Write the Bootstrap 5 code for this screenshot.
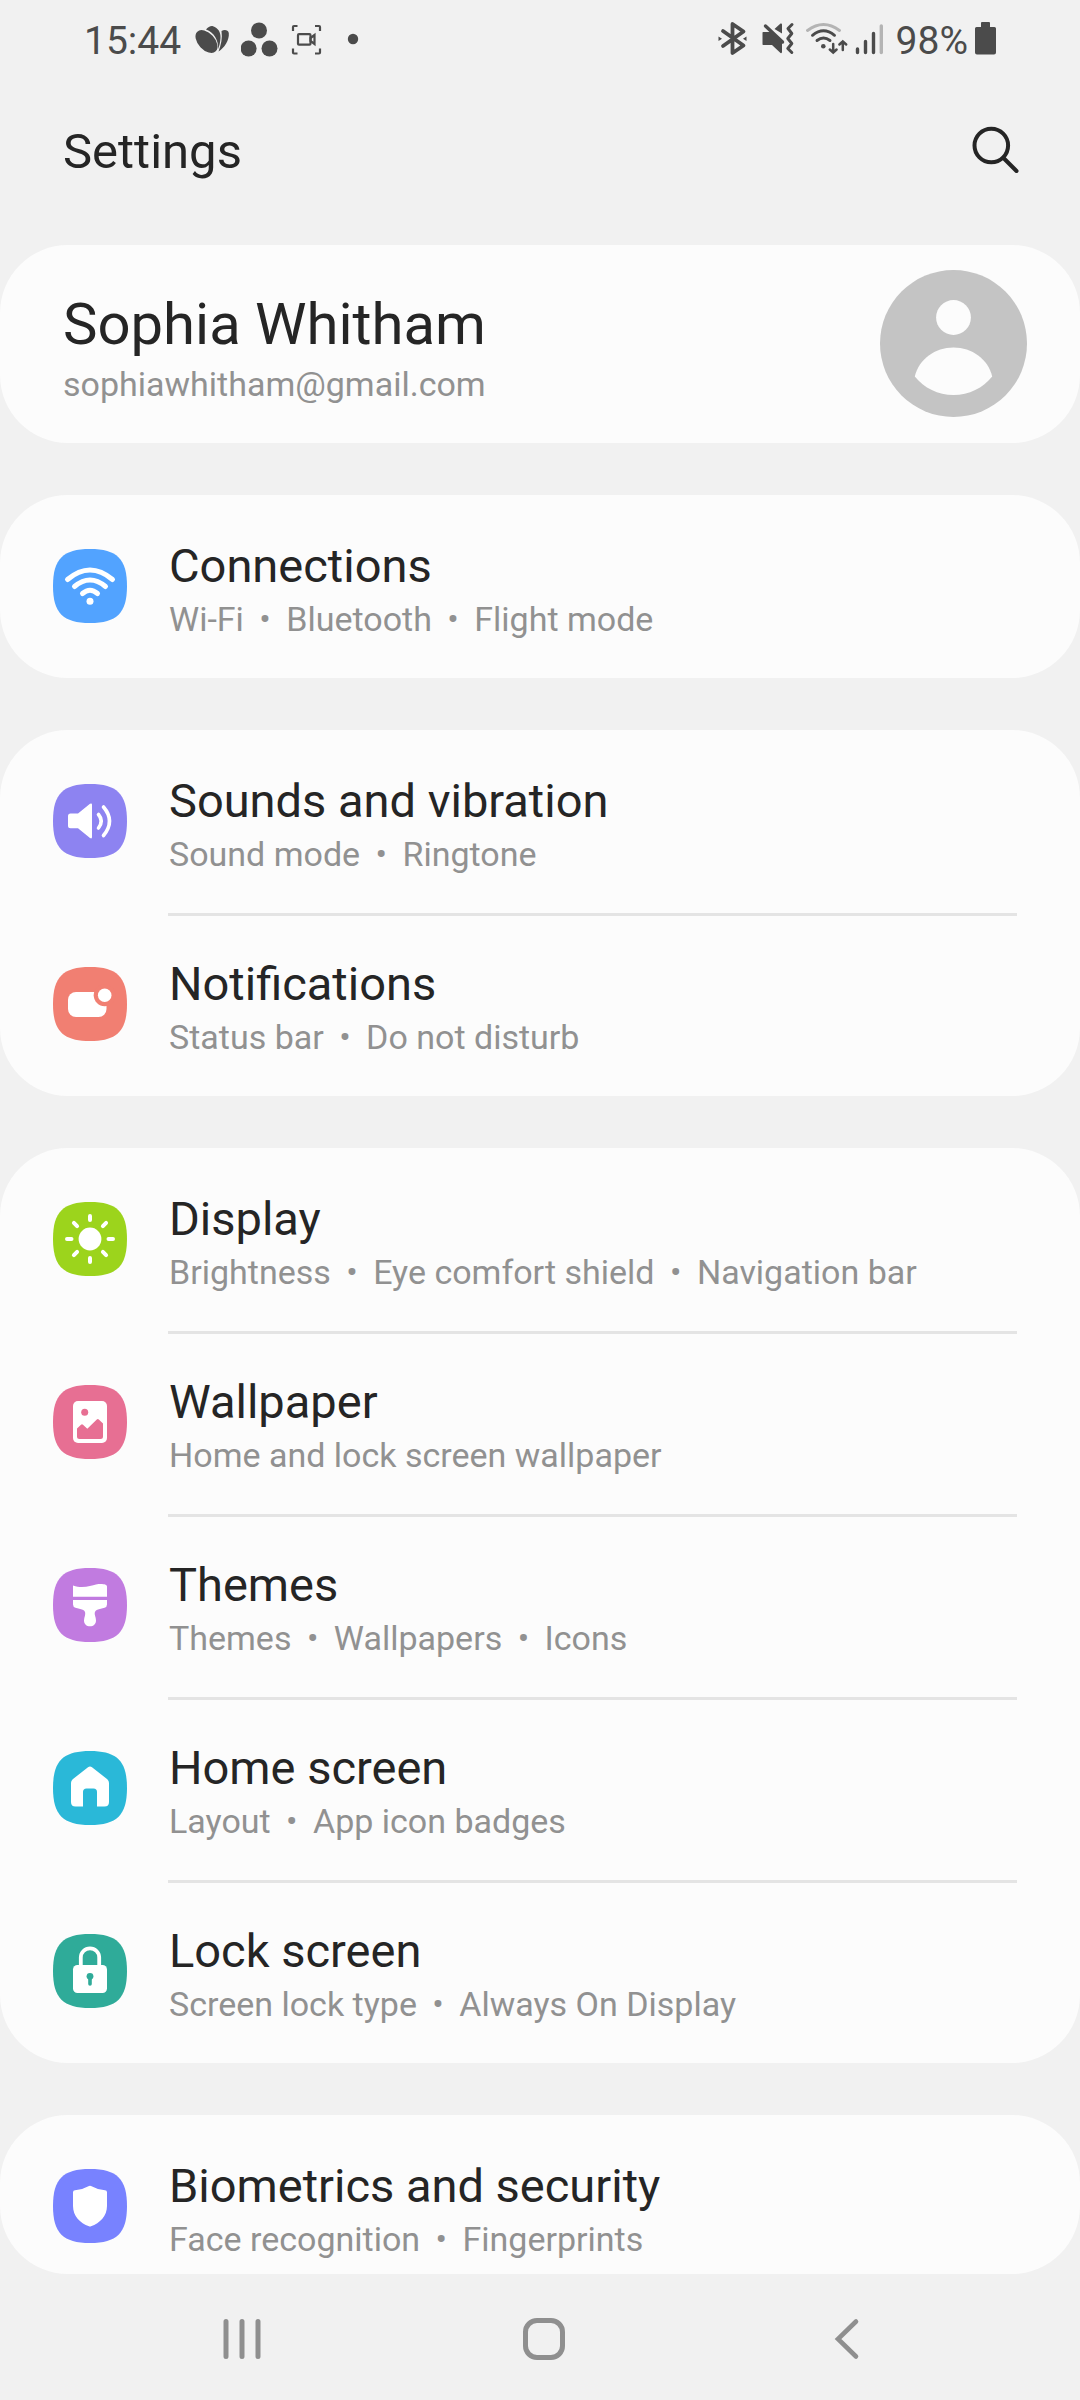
<!DOCTYPE html>
<html lang="en">
<head>
<meta charset="utf-8">
<meta name="viewport" content="width=device-width, initial-scale=1">
<title>Settings</title>
<link href="https://cdn.jsdelivr.net/npm/bootstrap@5.3.0/dist/css/bootstrap.min.css" rel="stylesheet">
<style>
  body { background: #f1f1f1; color: #252525; font-family: Roboto, "Noto Sans", sans-serif; }
  svg { display: block; flex: none; }
  .status-bar { height: 81px; padding: 0 80px 0 84px; color: #4b4b4b; font-size: 39px; line-height: 46px; }
  .status-left { gap: 8px; }
  .status-right { gap: 4px; }
  .page-head { padding: 41px 58px 63px 63px; }
  .page-title { font-size: 49px; line-height: 60px; font-weight: 400; }
  .panel-stack { gap: 52px; }
  .panel { background: #fcfcfc; border-radius: 68px; overflow: hidden; }
  .profile { padding: 25px 53px 26px 63px; }
  .profile-name { font-size: 58px; line-height: 72px; }
  .profile-text { padding-top: 8px; }
  .profile-mail { font-size: 34px; line-height: 48px; color: #919191; }
  .setting { padding: 0 63px 0 53px; gap: 41px; }
  .setting-icon { margin-top: 54px; }
  .setting-text { padding: 39px 0 37px 1px; }
  .setting + .setting .setting-text { border-top: 3px solid #e4e4e4; padding-top: 36px; }
  .setting-name { font-size: 47px; line-height: 63px; }
  .setting-info { font-size: 34px; line-height: 44px; color: #919191; }
  .sep { margin: 0 7px; }
  .panel-cut .setting-text { padding-bottom: 13px; }
  .nav-keys { height: 126px; padding: 4px 83px 0 91px; color: #8f8f8f; background: #f1f1f1; }
</style>
</head>
<body>
<svg width="0" height="0" class="position-absolute" aria-hidden="true">
  <symbol id="tile" viewBox="0 0 74 74"><path fill="currentColor" d="M37 0C64 0 74 10 74 37S64 74 37 74 0 64 0 37 10 0 37 0z"/></symbol>
</svg>

<div class="status-bar d-flex justify-content-between align-items-center">
  <div class="status-left d-flex align-items-center">
    <span>15:44</span>
    <svg width="44" height="40" viewBox="189 21 44 40" fill="currentColor">
      <ellipse cx="206.500" cy="41.500" rx="13.500" ry="8.300" transform="rotate(47 206.500 41.500)"/>
      <path d="M206 29.500C208 27 211 25.500 213 26.200C218 28 221 32 220.500 38C220.300 42 219.300 46 218.200 49C218.500 40 214 32.500 206 29.500z"/>
      <path d="M221.500 31C224 29.500 228 29.500 228.800 33C229.500 40 224.500 48 218.500 51.500C221 45 222.600 38 221.500 31z"/>
    </svg>
    <svg width="40" height="40" viewBox="241 21 40 40" fill="currentColor"><circle cx="259" cy="30.500" r="8"/><circle cx="248.600" cy="48.500" r="8"/><circle cx="269.500" cy="48.500" r="8"/></svg>
    <svg width="36" height="40" viewBox="289 21 36 40" fill="none" stroke="currentColor" stroke-width="2.200">
      <path d="M293 31v-4q0-1 1-1h3.500M315 26h4q1 0 1 1v4M293 48.500v4q0 1 1 1h3.500M315 53.500h4q1 0 1-1v-4"/>
      <rect x="298" y="34.200" width="12.500" height="10.500" rx="1"/><path d="M310.500 38l4-3v9l-4-3z"/>
    </svg>
    <svg width="42" height="40" viewBox="333 21 42 40" fill="currentColor"><circle cx="353" cy="39" r="5.200"/></svg>
  </div>
  <div class="status-right d-flex align-items-center">
    <svg width="40" height="40" viewBox="714 21 40 40" fill="none" stroke="currentColor" stroke-width="3.800" stroke-linejoin="round" stroke-linecap="round">
      <path d="M723 31l20.500 14.500-11 7.500V24l11 7.500L723 46"/><path d="M718.500 36.500v4.500l3.500-2.200zM746.500 36.500v4.500l-3.500-2.200z" fill="currentColor" stroke="none"/>
    </svg>
    <svg width="40" height="40" viewBox="758 21 40 40" fill="currentColor">
      <path d="M763 32h7.500l11.500 10.500v9.500q0 1.500-1.500 1l-8.500-8h-9q-.500 0-.500-1V33q0-1 .500-1zM774.500 29l6-5.500q1.500-.500 1.500 1v9z"/>
      <path d="M765.500 26l17 16" stroke="currentColor" stroke-width="3.400" stroke-linecap="round"/>
      <path d="M792 24.500l-4 4 3.800 5-4 5 4 5-4 5 4 4" fill="none" stroke="currentColor" stroke-width="3" stroke-linecap="round" stroke-linejoin="round"/>
    </svg>
    <svg width="46" height="40" viewBox="802 21 46 40" fill="none" stroke="currentColor" stroke-width="2.900" stroke-linecap="round">
      <path d="M807.500 30.500q16-12 32 0" stroke="#b4b4b4"/><path d="M812.500 35.300q11-9 22 0M817 40.500q6.500-5 13 0"/>
      <circle cx="823.300" cy="46.300" r="2.300" fill="currentColor" stroke="none"/>
      <path d="M833.200 44v8M829.800 49.500l3.400 3 3.400-3M842.800 50v-8.500M839.400 44.500l3.400-3 3.400 3" stroke-width="2.500"/>
    </svg>
    <svg width="40" height="40" viewBox="852 21 40 40" fill="none" stroke="currentColor" stroke-width="3.400" stroke-linecap="round">
      <path d="M857.500 49v3.500M865.500 41.500v11M873.500 33.500v19"/><path d="M881.300 26v26.500" stroke="#b4b4b4"/>
    </svg>
    <span>98%</span>
    <svg width="28" height="40" viewBox="972 21 28 40" fill="currentColor"><path d="M981 23q0-1 1-1h7q1 0 1 1v4h4.500q1.500 0 1.500 1.500v24q0 2-2 2h-17q-2 0-2-2v-24q0-1.500 1.500-1.500h4.500z"/></svg>
  </div>
</div>

<header class="page-head d-flex justify-content-between align-items-center">
  <h1 class="page-title mb-0">Settings</h1>
  <button type="button" class="btn p-0 border-0" aria-label="Search">
    <svg width="52" height="52" viewBox="0 0 52 52" fill="none" stroke="#252525" stroke-width="4" stroke-linecap="round"><circle cx="21.300" cy="19.500" r="16.800"/><path d="M33.500 32l13 13"/></svg>
  </button>
</header>

<main class="panel-stack d-flex flex-column">
  <a href="#" class="panel profile d-flex justify-content-between align-items-center text-reset text-decoration-none">
    <div class="profile-text">
      <div class="profile-name">Sophia Whitham</div>
      <div class="profile-mail">sophiawhitham@gmail.com</div>
    </div>
    <svg width="147" height="147" viewBox="0 0 147 147" fill="#fcfcfc">
      <circle cx="73.500" cy="73.500" r="73.500" fill="#c4c4c4"/><circle cx="73.500" cy="47.500" r="17.400"/>
      <path d="M34.800 106.500C39 89 55 77.500 73.500 77.500S108 89 112.200 106.500C103 118 89 125 73.500 125S44 118 34.800 106.500z"/>
    </svg>
  </a>

  <section class="panel">
    <a href="#" class="setting d-flex text-reset text-decoration-none">
      <svg class="setting-icon" width="74" height="74" viewBox="0 0 74 74" fill="none" stroke="#fff" stroke-width="5" stroke-linecap="round">
        <use href="#tile" color="#52a3ff" stroke="none"/>
        <path d="M14.500 30.500q22.500-19 45 0M21.500 37.500q15.500-13 31 0M29.500 44.500q7.500-6.500 15 0"/><circle cx="37" cy="52.300" r="3.500" fill="#fff" stroke="none"/>
      </svg>
      <div class="setting-text flex-grow-1">
        <div class="setting-name">Connections</div>
        <div class="setting-info">Wi-Fi <span class="sep">•</span> Bluetooth <span class="sep">•</span> Flight mode</div>
      </div>
    </a>
  </section>

  <section class="panel">
    <a href="#" class="setting d-flex text-reset text-decoration-none">
      <svg class="setting-icon" width="74" height="74" viewBox="0 0 74 74" fill="#fff">
        <use href="#tile" color="#8d83f1"/>
        <path d="M17.500 29.500H25L37 19.800q2-1.200 2 1V53q0 2.200-2 1L25 44.300h-7.500q-2.500 0-2.500-2.500V32q0-2.500 2.500-2.500z"/>
        <path d="M45.500 30.500q5.500 6.500 0 13.500M50.500 23q12 14 0 28.500" fill="none" stroke="#fff" stroke-width="3.600" stroke-linecap="round"/>
      </svg>
      <div class="setting-text flex-grow-1">
        <div class="setting-name">Sounds and vibration</div>
        <div class="setting-info">Sound mode <span class="sep">•</span> Ringtone</div>
      </div>
    </a>
    <a href="#" class="setting d-flex text-reset text-decoration-none">
      <svg class="setting-icon" width="74" height="74" viewBox="0 0 74 74" fill="#fff">
        <use href="#tile" color="#f17f72"/>
        <rect x="15" y="25" width="38.500" height="25" rx="8"/><circle cx="51.700" cy="28.300" r="11" fill="#f17f72"/><circle cx="51.700" cy="28.300" r="6.800"/>
      </svg>
      <div class="setting-text flex-grow-1">
        <div class="setting-name">Notifications</div>
        <div class="setting-info">Status bar <span class="sep">•</span> Do not disturb</div>
      </div>
    </a>
  </section>

  <section class="panel">
    <a href="#" class="setting d-flex text-reset text-decoration-none">
      <svg class="setting-icon" width="74" height="74" viewBox="0 0 74 74" fill="#fff" stroke="#fff" stroke-width="4" stroke-linecap="round">
        <use href="#tile" color="#9cd41c" stroke="none"/>
        <circle cx="37" cy="37" r="11.400" stroke="none"/>
        <path d="M37 14v4M37 56v4M14 37h4.500M55.500 37H60M20.900 20.900l3.200 3.200M49.900 49.900l3.200 3.200M20.900 53.100l3.200-3.200M49.900 24.100l3.200-3.200"/>
      </svg>
      <div class="setting-text flex-grow-1">
        <div class="setting-name">Display</div>
        <div class="setting-info">Brightness <span class="sep">•</span> Eye comfort shield <span class="sep">•</span> Navigation bar</div>
      </div>
    </a>
    <a href="#" class="setting d-flex text-reset text-decoration-none">
      <svg class="setting-icon" width="74" height="74" viewBox="0 0 74 74" fill="#fff">
        <use href="#tile" color="#e76f93"/>
        <rect x="20" y="16" width="34" height="42" rx="5"/>
        <g fill="#e76f93"><circle cx="31.700" cy="27.300" r="3.500"/><path d="M24 43.500l4-3.700q1-1 2 0l4.300 4 9.500-9.300q1-1 2 0L50 38.500V51.500q0 2.500-2.500 2.500h-21q-2.500 0-2.500-2.500z"/></g>
      </svg>
      <div class="setting-text flex-grow-1">
        <div class="setting-name">Wallpaper</div>
        <div class="setting-info">Home and lock screen wallpaper</div>
      </div>
    </a>
    <a href="#" class="setting d-flex text-reset text-decoration-none">
      <svg class="setting-icon" width="74" height="74" viewBox="0 0 74 74" fill="#fff">
        <use href="#tile" color="#c17be0"/>
        <path d="M20 17.500C30 21 38 17.500 43 16.500C48 15.500 54 16 54 18.500V28.700H20zM20 32h34v4.500q0 2.500-2.500 3.200L45 41.500C41.500 42.500 41.500 45 42 47.500Q43 50.500 43 52.500C43 56 40.500 58.300 37 58.300S31 56 31 52.500Q31 50.500 32 47.500C32.500 45 32.500 42.500 29 41.500L22.500 39.700Q20 39 20 36.500z"/>
      </svg>
      <div class="setting-text flex-grow-1">
        <div class="setting-name">Themes</div>
        <div class="setting-info">Themes <span class="sep">•</span> Wallpapers <span class="sep">•</span> Icons</div>
      </div>
    </a>
    <a href="#" class="setting d-flex text-reset text-decoration-none">
      <svg class="setting-icon" width="74" height="74" viewBox="0 0 74 74" fill="#fff">
        <use href="#tile" color="#2ab8d8"/>
        <path d="M35 16.300q2-1.500 4 0L54.300 28.300Q56 29.700 56 32V51q0 4.500-4.500 4.500H44V41q0-3.500-3.500-3.500h-7Q30 37.500 30 41v14.500h-7.500Q18 55.500 18 51V32q0-2.300 1.700-3.700z"/>
      </svg>
      <div class="setting-text flex-grow-1">
        <div class="setting-name">Home screen</div>
        <div class="setting-info">Layout <span class="sep">•</span> App icon badges</div>
      </div>
    </a>
    <a href="#" class="setting d-flex text-reset text-decoration-none">
      <svg class="setting-icon" width="74" height="74" viewBox="0 0 74 74" fill="#fff">
        <use href="#tile" color="#2fab99"/>
        <rect x="20" y="31" width="34" height="28" rx="4.500"/>
        <path d="M27.800 32v-8.500a9.200 9.200 0 0 1 18.400 0V32" fill="none" stroke="#fff" stroke-width="3.800"/>
        <circle cx="37" cy="42.300" r="3.400" fill="#2fab99"/><path d="M37 43v7" stroke="#2fab99" stroke-width="3.600" stroke-linecap="round"/>
      </svg>
      <div class="setting-text flex-grow-1">
        <div class="setting-name">Lock screen</div>
        <div class="setting-info">Screen lock type <span class="sep">•</span> Always On Display</div>
      </div>
    </a>
  </section>

  <section class="panel panel-cut">
    <a href="#" class="setting d-flex text-reset text-decoration-none">
      <svg class="setting-icon" width="74" height="74" viewBox="0 0 74 74" fill="#fff">
        <use href="#tile" color="#7882ff"/>
        <path d="M36 17q1-.500 2 0Q44 20.500 52 21.300q2 .200 2 2V37C54 47 47 54 38 57.300q-1 .400-2 0C27 54 20 47 20 37V23.300q0-1.800 2-2Q30 20.500 36 17z"/>
      </svg>
      <div class="setting-text flex-grow-1">
        <div class="setting-name">Biometrics and security</div>
        <div class="setting-info">Face recognition <span class="sep">•</span> Fingerprints</div>
      </div>
    </a>
  </section>
</main>

<nav class="nav-keys d-flex align-items-center" aria-label="System navigation">
  <button type="button" class="btn p-0 border-0 flex-fill d-flex justify-content-center" aria-label="Recent apps">
    <svg width="48" height="48" viewBox="0 0 48 48" fill="none" stroke="#8f8f8f" stroke-width="5" stroke-linecap="round"><path d="M8 6.500v35M24 6.500v35M40 6.500v35"/></svg>
  </button>
  <button type="button" class="btn p-0 border-0 flex-fill d-flex justify-content-center" aria-label="Home">
    <svg width="48" height="48" viewBox="0 0 48 48" fill="none" stroke="#8f8f8f" stroke-width="5"><rect x="5.500" y="5.500" width="37" height="37" rx="11.500"/></svg>
  </button>
  <button type="button" class="btn p-0 border-0 flex-fill d-flex justify-content-center" aria-label="Back">
    <svg width="48" height="48" viewBox="0 0 48 48" fill="none" stroke="#8f8f8f" stroke-width="4.600" stroke-linecap="round" stroke-linejoin="miter"><path d="M34 6.500L16 24l18 17.500"/></svg>
  </button>
</nav>
<script src="https://cdn.jsdelivr.net/npm/bootstrap@5.3.0/dist/js/bootstrap.bundle.min.js"></script>
</body>
</html>
